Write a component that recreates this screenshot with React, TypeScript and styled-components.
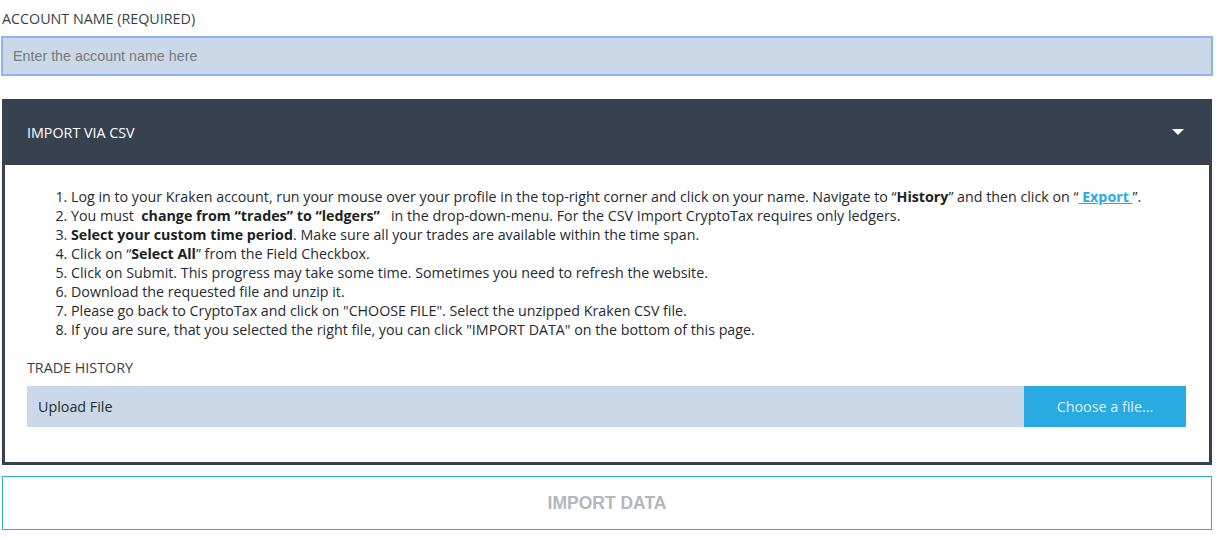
import React from 'react'
import styled, { createGlobalStyle } from 'styled-components'

const GlobalStyle = createGlobalStyle`
  body {
    margin: 0;
    background: #fff;
    font-family: 'Open Sans', 'Noto Sans', sans-serif;
  }
`

const Page = styled.div`
  width: 1211px;
  margin-left: 1px;
  padding-top: 10px;
`

const Label = styled.div`
  font-size: 14.3px;
  color: #3a3f47;
  padding-left: 1px;
  line-height: 18px;
  margin-bottom: 8px;
`

const NameInput = styled.input`
  display: block;
  box-sizing: border-box;
  width: 1212px;
  height: 40px;
  margin: 0;
  padding: 0 10px;
  border: 2px solid #8fb1ee;
  background: #cbd8e8;
  font-family: 'Liberation Sans', Arial, sans-serif;
  font-size: 14.3px;
  color: #333;
  outline: none;

  &::placeholder {
    color: #777b80;
  }
`

const Panel = styled.section`
  box-sizing: border-box;
  margin: 23px 0 0 1px;
  width: 1210px;
  border: 3px solid #37414f;
  border-top: 0;
  background: #fff;
`

const PanelHeader = styled.div`
  display: flex;
  align-items: center;
  justify-content: space-between;
  height: 66px;
  margin: 0 -3px;
  padding: 0 28px 0 25px;
  background: #37414f;
  color: #fff;
  font-size: 14.3px;
`

const Caret = styled.span`
  width: 0;
  height: 0;
  border-left: 6px solid transparent;
  border-right: 6px solid transparent;
  border-top: 6px solid #fff;
`

const PanelBody = styled.div`
  padding: 22px 23px 35px 20px;
`

const Steps = styled.ol`
  margin: 0;
  padding-left: 46px;
  font-size: 14.25px;
  line-height: 19px;
  color: #262a30;
`

const Step = styled.li``

const Strong = styled.b`
  font-weight: 700;
  color: #1d1f23;
`

const ExportLink = styled.a`
  color: #29abe2;
  font-weight: 700;
  text-decoration: underline;
  white-space: pre;
`

const SubLabel = styled(Label)`
  margin: 20px 0 9px 2px;
  padding: 0;
`

const UploadRow = styled.div`
  display: flex;
  height: 41px;
  margin-left: 2px;
  background: #cbd8e8;
`

const UploadText = styled.div`
  flex: 1;
  display: flex;
  align-items: center;
  padding-left: 11px;
  font-size: 14.3px;
  color: #262a30;
`

const ChooseButton = styled.button`
  width: 162px;
  border: 0;
  background: #29abe2;
  color: #dff0f9;
  font-family: 'Open Sans', sans-serif;
  font-size: 14.3px;
  cursor: pointer;
`

const ImportButton = styled.button`
  display: block;
  box-sizing: border-box;
  width: 1210px;
  height: 54px;
  margin: 11px 0 0 1px;
  border: 1px solid #29abe2;
  background: #fff;
  color: #b3b6ba;
  font-family: 'Liberation Sans', Arial, sans-serif;
  font-size: 17.5px;
  font-weight: 700;
  cursor: pointer;
`

export default function App() {
  return (
    <Page>
      <GlobalStyle />
      <Label>ACCOUNT NAME (REQUIRED)</Label>
      <NameInput placeholder="Enter the account name here" />
      <Panel>
        <PanelHeader>
          <span>IMPORT VIA CSV</span>
          <Caret />
        </PanelHeader>
        <PanelBody>
          <Steps>
            <Step>
              Log in to your Kraken account, run your mouse over your profile in the top-right corner and click on your name. Navigate to “<Strong>History</Strong>” and then click on “<ExportLink href="#"> Export </ExportLink>”.
            </Step>
            <Step>
              You must <Strong>&nbsp;change from “trades” to “ledgers” </Strong>&nbsp;&nbsp;in the drop-down-menu. For the CSV Import CryptoTax requires only ledgers.
            </Step>
            <Step>
              <Strong>Select your custom time period</Strong>. Make sure all your trades are available within the time span.
            </Step>
            <Step>
              Click on “<Strong>Select All</Strong>” from the Field Checkbox.
            </Step>
            <Step>Click on Submit. This progress may take some time. Sometimes you need to refresh the website.</Step>
            <Step>Download the requested file and unzip it.</Step>
            <Step>Please go back to CryptoTax and click on "CHOOSE FILE". Select the unzipped Kraken CSV file.</Step>
            <Step>If you are sure, that you selected the right file, you can click "IMPORT DATA" on the bottom of this page.</Step>
          </Steps>
          <SubLabel>TRADE HISTORY</SubLabel>
          <UploadRow>
            <UploadText>Upload File</UploadText>
            <ChooseButton>Choose a file...</ChooseButton>
          </UploadRow>
        </PanelBody>
      </Panel>
      <ImportButton>IMPORT DATA</ImportButton>
    </Page>
  )
}
